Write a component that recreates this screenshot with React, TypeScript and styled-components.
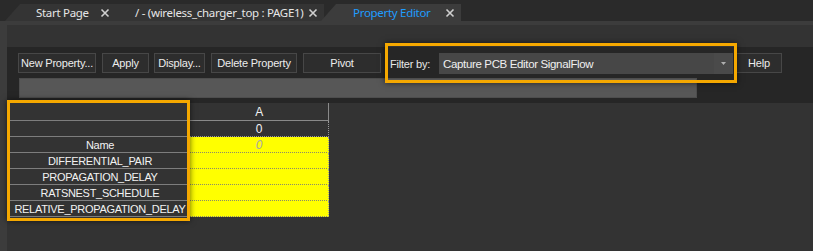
import React from "react";
import styled, { createGlobalStyle } from "styled-components";

const Global = createGlobalStyle`
  html, body { margin: 0; padding: 0; background: #333333; }
  body { width: 813px; height: 251px; overflow: hidden; }
`;

const Page = styled.div`
  width: 813px;
  height: 251px;
  display: flex;
  flex-direction: column;
  background: #2b2b2b;
  position: relative;
  overflow: hidden;
`;

const TabBar = styled.div`
  height: 21px;
  flex: none;
  display: flex;
  align-items: flex-end;
  padding-left: 5px;
  background: #2a2a2a;
`;

const Tab = styled.div<{ $active?: boolean; $w: number; $slant?: boolean; $z: number; $pad: number }>`
  position: relative;
  z-index: ${(p) => p.$z};
  width: ${(p) => p.$w}px;
  height: 17px;
  margin-right: -3px;
  display: flex;
  align-items: center;
  justify-content: space-between;
  box-sizing: border-box;
  padding-left: ${(p) => p.$pad}px;
  padding-right: 6px;
  background: ${(p) => (p.$active ? "#3c3c3c" : "#343434")};
  clip-path: ${(p) =>
    p.$slant
      ? "polygon(15px 0, 100% 0, 100% 100%, 0 100%)"
      : "polygon(0 0, 100% 0, 100% 100%, 0 100%)"};
  font-family: "Noto Sans", "Open Sans", sans-serif;
  font-size: 11.5px;
  letter-spacing: -0.3px;
  color: ${(p) => (p.$active ? "#1f9dff" : "#e6e6e6")};
  white-space: nowrap;
`;

const TabClose = styled.span`
  display: flex;
  align-items: center;
  justify-content: center;
  width: 10px;
  height: 10px;
`;

const Frame = styled.div`
  flex: 1;
  border-top: 4px solid #3c3c3c;
  border-left: 7px solid #3c3c3c;
  background: #333333;
  display: flex;
  flex-direction: column;
`;

const Spacer = styled.div`
  height: 22px;
  flex: none;
`;

const Toolbar = styled.div`
  height: 56px;
  flex: none;
  background: #262626;
  box-sizing: border-box;
  padding: 6px 0 0 11px;
  display: flex;
  flex-direction: column;
  gap: 4px;
`;

const ButtonRow = styled.div`
  display: flex;
  align-items: flex-start;
  font-family: "Liberation Sans", Arial, sans-serif;
  font-size: 11px;
  letter-spacing: -0.2px;
`;

const Button = styled.div<{ $w: number; $gap: number }>`
  width: ${(p) => p.$w}px;
  height: 20px;
  margin-right: ${(p) => p.$gap}px;
  box-sizing: border-box;
  border: 1px solid #474747;
  background: #2d2d2d;
  color: #ececec;
  display: flex;
  align-items: center;
  justify-content: center;
  white-space: nowrap;
`;

const FilterGroup = styled.div`
  display: flex;
  align-items: center;
  height: 21px;
  margin-left: 5px;
  margin-right: 3px;
`;

const FilterLabel = styled.span`
  color: #e8e8e8;
  width: 53px;
  padding-left: 4px;
  box-sizing: border-box;
`;

const Combo = styled.div`
  width: 294px;
  height: 21px;
  display: flex;
  background: #474747;
  color: #f0f0f0;
`;

const ComboText = styled.div`
  flex: 1;
  display: flex;
  align-items: center;
  padding-left: 4px;
  font-size: 11.5px;
  letter-spacing: -0.35px;
`;

const ComboArrow = styled.div`
  width: 19px;
  background: #4a4a4a;
  display: flex;
  align-items: center;
  justify-content: center;
`;

const InputBar = styled.div`
  width: 678px;
  height: 20px;
  margin-left: 1px;
  box-sizing: border-box;
  border: 1px solid #4d4d4d;
  background: #575757;
`;

const GridArea = styled.div`
  flex: 1;
  background: #333333;
  padding-left: 3px;
`;

const Grid = styled.div`
  display: grid;
  grid-template-columns: 180px 139px;
  grid-template-rows: 18px repeat(6, 16px);
  width: 319px;
  font-family: "Liberation Sans", Arial, sans-serif;
  font-size: 11px;
  letter-spacing: -0.3px;
  color: #f2f2f2;
`;

const HeadCorner = styled.div`
  box-sizing: border-box;
  border-right: 1px solid #cfcfcf;
  border-bottom: 1px solid #7d7d7d;
`;

const HeadCol = styled.div`
  box-sizing: border-box;
  border-right: 1px solid #8a8a8a;
  border-bottom: 1px solid #8a8a8a;
  display: flex;
  align-items: center;
  justify-content: center;
  font-size: 12px;
  padding-top: 1px;
`;

const RowHead = styled.div`
  box-sizing: border-box;
  border-bottom: 1px solid #7d7d7d;
  display: flex;
  align-items: center;
  justify-content: center;
  white-space: nowrap;
`;

const Cell = styled.div<{ $yellow?: boolean; $muted?: boolean }>`
  box-sizing: border-box;
  background: ${(p) => (p.$yellow ? "#ffff00" : "#333333")};
  border-right: 1px dotted #9a9a9a;
  border-bottom: 1px dotted ${(p) => (p.$yellow ? "#8a8a6a" : "#9a9a9a")};
  display: flex;
  align-items: center;
  justify-content: center;
  color: ${(p) => (p.$muted ? "#a8a8a8" : "#f2f2f2")};
  font-style: ${(p) => (p.$muted ? "italic" : "normal")};
  font-size: 12px;
`;

const Highlight = styled.div<{ $x: number; $y: number; $w: number; $h: number }>`
  position: absolute;
  left: ${(p) => p.$x}px;
  top: ${(p) => p.$y}px;
  width: ${(p) => p.$w}px;
  height: ${(p) => p.$h}px;
  box-sizing: border-box;
  border: 3px solid #f5a800;
  box-shadow: 0 0 6px rgba(0, 0, 0, 0.6);
  pointer-events: none;
`;

const CloseIcon = () => (
  <svg width="10" height="10" viewBox="0 0 10 10">
    <path d="M1.5 1.5 L8.5 8.5 M8.5 1.5 L1.5 8.5" stroke="#cfcfcf" strokeWidth="1.6" />
  </svg>
);

const rows = [
  "DIFFERENTIAL_PAIR",
  "PROPAGATION_DELAY",
  "RATSNEST_SCHEDULE",
  "RELATIVE_PROPAGATION_DELAY",
];

export default function App() {
  return (
    <Page>
      <Global />
      <TabBar>
        <Tab $w={111} $slant $z={1} $pad={31}>
          <span>Start Page</span>
          <TabClose><CloseIcon /></TabClose>
        </Tab>
        <Tab $w={211} $z={2} $pad={22}>
          <span>/ - (wireless_charger_top : PAGE1)</span>
          <TabClose><CloseIcon /></TabClose>
        </Tab>
        <Tab $active $w={140} $slant $z={3} $pad={32}>
          <span>Property Editor</span>
          <TabClose><CloseIcon /></TabClose>
        </Tab>
      </TabBar>
      <Frame>
        <Spacer />
        <Toolbar>
          <ButtonRow>
            <Button $w={78} $gap={6}>New Property...</Button>
            <Button $w={47} $gap={5}>Apply</Button>
            <Button $w={51} $gap={6}>Display...</Button>
            <Button $w={86} $gap={6}>Delete Property</Button>
            <Button $w={78} $gap={0}>Pivot</Button>
            <FilterGroup>
              <FilterLabel>Filter by:</FilterLabel>
              <Combo>
                <ComboText>Capture PCB Editor SignalFlow</ComboText>
                <ComboArrow>
                  <svg width="5" height="3" viewBox="0 0 5 3">
                    <path d="M0 0 H5 L2.5 3 Z" fill="#b0b0b0" />
                  </svg>
                </ComboArrow>
              </Combo>
            </FilterGroup>
            <Button $w={46} $gap={0}>Help</Button>
          </ButtonRow>
          <InputBar />
        </Toolbar>
        <GridArea>
          <Grid>
            <HeadCorner />
            <HeadCol>A</HeadCol>
            <RowHead />
            <Cell>0</Cell>
            <RowHead>Name</RowHead>
            <Cell $yellow $muted>0</Cell>
            {rows.map((r) => (
              <React.Fragment key={r}>
                <RowHead>{r}</RowHead>
                <Cell $yellow />
              </React.Fragment>
            ))}
          </Grid>
        </GridArea>
      </Frame>
      <Highlight $x={385} $y={43} $w={352} $h={40} />
      <Highlight $x={7} $y={100} $w={183} $h={121} />
    </Page>
  );
}
